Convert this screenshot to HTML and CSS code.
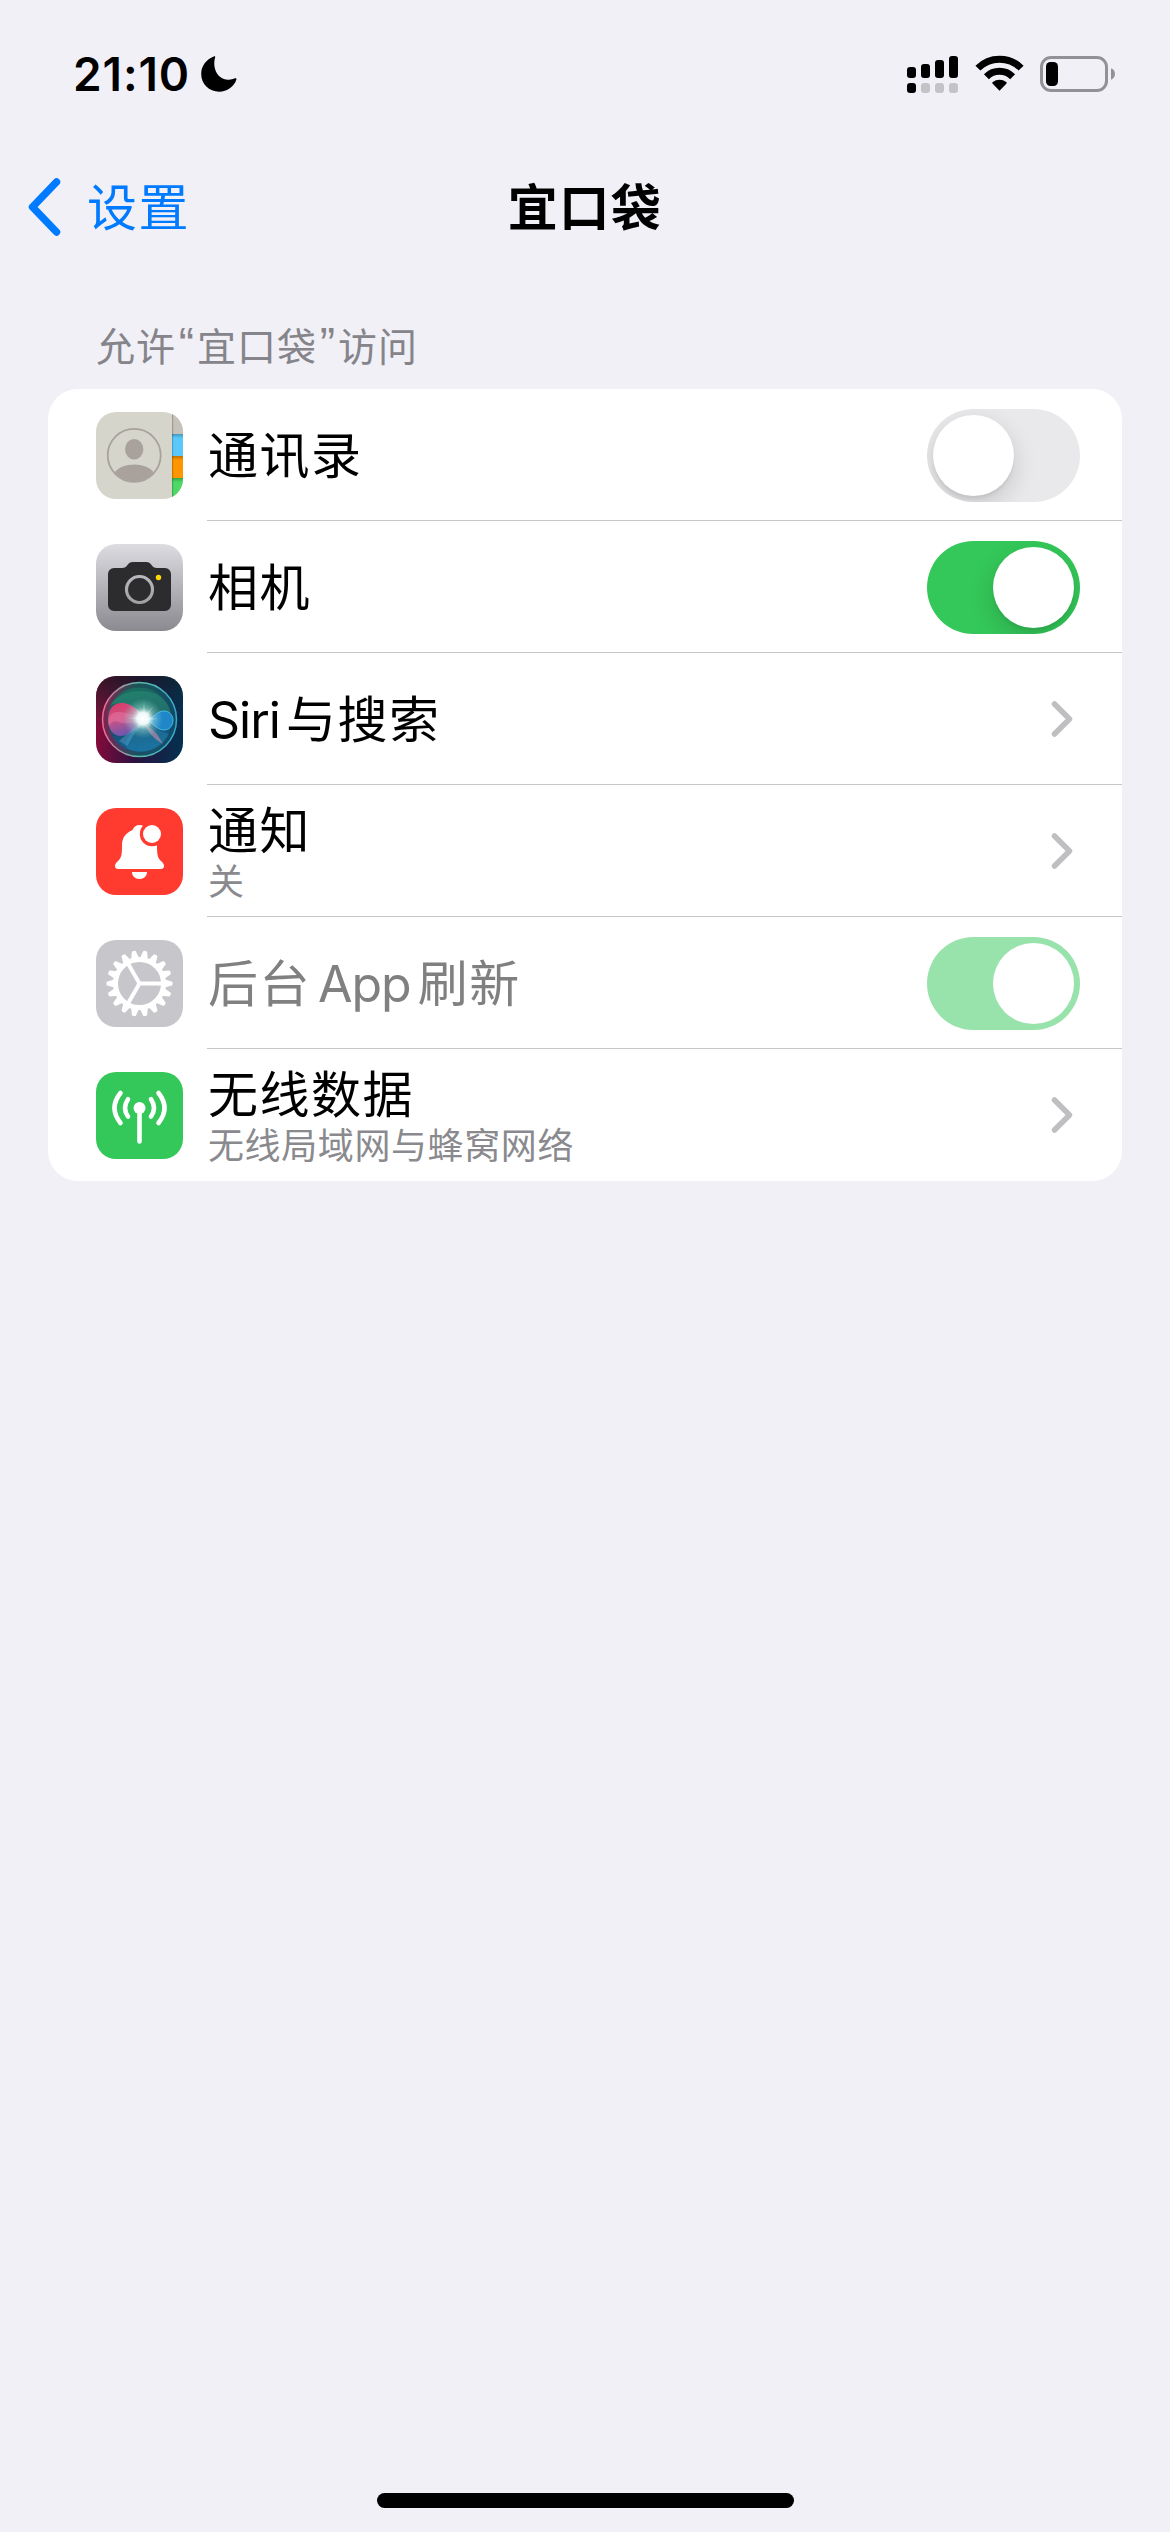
FILE: index.html
```html
<!DOCTYPE html>
<html lang="zh-CN">
<head>
<meta charset="utf-8">
<title>宜口袋</title>
<link rel="stylesheet" href="styles.css">
</head>
<body>
<div class="screen">
  <header class="status">
    <div class="status-left">
      <span class="time">21:10</span>
      <svg class="moon" width="36" height="36" viewBox="0 0 36 36"><path d="M12.8.5C13.8.1 14.5.6 14.1 1.600 11.400 11 15.500 23.400 27 23.700c2.700.1 5-.5 7-1.400 1-.4 1.800.2 1.400 1.300C33 31 26 35.700 18.200 35.700 8 35.700.2 28 .2 18 .2 10 5.300 3.300 12.800.5z"/></svg>
    </div>
    <div class="status-right">
      <svg width="52" height="38" viewBox="0 0 52 38">
        <rect x="0" y="11" width="9" height="11" rx="3"/><rect x="14" y="8" width="9" height="14" rx="3"/><rect x="28" y="4" width="9" height="18" rx="3"/><rect x="42" y="0" width="9" height="22" rx="3"/>
        <rect x="0" y="27" width="9" height="10" rx="3"/><g fill="#c3c3c7"><rect x="14" y="27" width="9" height="10" rx="3"/><rect x="28" y="27" width="9" height="10" rx="3"/><rect x="42" y="27" width="9" height="10" rx="3"/></g>
      </svg>
      <svg class="wifi" width="50" height="38" viewBox="0 0 50 38">
        <g fill="none" stroke="#000" stroke-width="7"><path d="M2.900 13.100a30.500 30.500 0 0 1 43.200 0"/><path d="M11.400 21.800a18.500 18.500 0 0 1 26.200 0"/></g>
        <path d="M24.500 35.700 17.700 28.800c-.6-.7-.5-1.300.1-1.700a11 11 0 0 1 13.400 0c.6.400.7 1 .1 1.700z"/>
      </svg>
      <svg class="battery" width="76" height="36" viewBox="0 0 76 36">
        <rect x="1.500" y="1.500" width="65" height="33" rx="9.500" fill="none" stroke="#929196" stroke-width="3"/>
        <rect x="6" y="6" width="12" height="24" rx="4.500"/><path d="M71 12.300c5.300 2 5.300 9.400 0 11.400z" fill="#929196"/>
      </svg>
    </div>
  </header>

  <nav class="nav">
    <a class="back">
      <svg width="36" height="60" viewBox="0 0 36 60"><path d="M31.500 5 7.500 30l24 25" fill="none" stroke="#007aff" stroke-width="7.500" stroke-linecap="round" stroke-linejoin="round"/></svg>
      <span>设置</span>
    </a>
    <h1 class="nav-title">宜口袋</h1>
  </nav>

  <h2 class="group-title">允许<span class="quote">“</span>宜口袋<span class="quote">”</span>访问</h2>

  <main class="card">
    <div class="row">
      <svg class="icon" width="87" height="87" viewBox="0 0 87 87">
        <defs><linearGradient id="tab" x1="0" x2="0" y1="0" y2="1"><stop offset="0" stop-opacity=".25"/><stop offset="1" stop-opacity="0"/></linearGradient></defs>
        <path fill="#d5d5cc" d="M0 0h87v87H0z"/><path fill="#c6c1b9" d="M76 0h11v22H76z"/><path fill="#5ac8fa" d="M76 22h11v22H76z"/><path fill="#ff9500" d="M76 44h11v22H76z"/><path fill="#4cd964" d="M76 66h11v21H76z"/>
        <path fill="url(#tab)" d="M76 22h11v4H76z"/><path fill="url(#tab)" d="M76 44h11v4H76z"/><path fill="url(#tab)" d="M76 66h11v4H76z"/><path opacity=".2" d="M76 0h1.200v87H76z"/>
        <circle cx="38.200" cy="43.300" r="26.500" fill="none" stroke="#a9a29c" stroke-width="1.800"/><ellipse cx="38.200" cy="37.300" rx="9.200" ry="10.300" fill="#a9a29c"/>
        <path d="M18.500 60.500c4-5.300 11-8 19.700-8s15.700 2.700 19.700 8a26.500 26.500 0 0 1-39.400 0z" fill="#a9a29c"/>
      </svg>
      <div class="body"><div class="text"><span class="label">通讯录</span></div><span class="switch"></span></div>
    </div>

    <div class="row">
      <svg class="icon" width="87" height="87" viewBox="0 0 87 87">
        <defs><linearGradient id="cam" x1="0" x2="0" y1="0" y2="1"><stop offset="0" stop-color="#dddce1"/><stop offset="1" stop-color="#8b8a90"/></linearGradient><linearGradient id="lens" x1="0" x2="0" y1="0" y2="1"><stop offset="0" stop-color="#b9b8bd"/><stop offset="1" stop-color="#a09fa4"/></linearGradient></defs>
        <path fill="url(#cam)" d="M0 0h87v87H0z"/>
        <path fill="#2c2c2e" d="M18 24h8c3 0 4-1 5.500-3s2.500-3 5.500-3h13c3 0 4 1 5.500 3s2.500 3 5.500 3h8a6 6 0 0 1 6 6v31a6 6 0 0 1-6 6H18a6 6 0 0 1-6-6V30a6 6 0 0 1 6-6z"/>
        <circle cx="43.500" cy="45.500" r="13" fill="none" stroke="url(#lens)" stroke-width="3.200"/><circle cx="62.500" cy="33.500" r="2.700" fill="#ffd60a"/>
      </svg>
      <div class="body"><div class="text"><span class="label">相机</span></div><span class="switch on"></span></div>
    </div>

    <div class="row">
      <svg class="icon" width="87" height="87" viewBox="0 0 87 87">
        <defs>
          <linearGradient id="sbg" x1="0" y1=".45" x2="1" y2=".55"><stop offset="0" stop-color="#8c0a3a"/><stop offset=".5" stop-color="#2a1240"/><stop offset="1" stop-color="#04304e"/></linearGradient>
          <linearGradient id="stop" x1=".45" y1="0" x2=".55" y2=".5"><stop offset="0" stop-color="#0c1a1c" stop-opacity=".6"/><stop offset="1" stop-color="#063a35" stop-opacity="0"/></linearGradient>
          <linearGradient id="orb" x1=".4" y1="0" x2=".6" y2="1"><stop offset="0" stop-color="#1b7660"/><stop offset=".5" stop-color="#1a4863"/><stop offset="1" stop-color="#1268a8"/></linearGradient>
          <linearGradient id="ring" x1="0" y1=".5" x2="1" y2=".5"><stop offset="0" stop-color="#f06a94"/><stop offset=".5" stop-color="#59bba8"/><stop offset="1" stop-color="#35a9c9"/></linearGradient>
          <linearGradient id="rim" x1="0" y1=".5" x2="1" y2=".5"><stop offset="0" stop-color="#8e1c4c"/><stop offset=".45" stop-color="#1d4c55"/><stop offset="1" stop-color="#0f4a66"/></linearGradient>
          <linearGradient id="pink" x1="0" y1="0" x2=".4" y2="1"><stop offset="0" stop-color="#ec3365"/><stop offset=".5" stop-color="#dc5287"/><stop offset="1" stop-color="#6f58b4"/></linearGradient>
          <radialGradient id="glow"><stop offset="0" stop-color="#fff"/><stop offset=".3" stop-color="#f2fffc" stop-opacity=".95"/><stop offset=".55" stop-color="#b7eee4" stop-opacity=".45"/><stop offset="1" stop-color="#85d9d0" stop-opacity="0"/></radialGradient>
        </defs>
        <path fill="url(#sbg)" d="M0 0h87v87H0z"/><path fill="url(#stop)" d="M0 0h87v87H0z"/>
        <circle cx="43.500" cy="43.500" r="37" fill="url(#orb)"/>
        <circle cx="43.500" cy="43.500" r="34.500" fill="none" stroke="url(#rim)" stroke-opacity=".8" stroke-width="5"/>
        <circle cx="43.500" cy="43.500" r="37" fill="none" stroke="url(#ring)" stroke-width="1.500"/>
        <path d="M14 30C22 14 48 12 60 18c8 4 14 12 15 20-14-6-19 2-27 6C39 36 25 22 14 30z" fill="#2c9a79" opacity=".45"/>
        <path d="M47 45C35 55 28 63 31 72c14 8 34 3 42-14-9-2-17-8-26-13z" fill="#258cac" opacity=".4"/>
        <path d="M50 43C41 32 33 26 24 27c-9 1-12 9-12 17 0 9 5 16 13 16 10 0 16-10 25-17z" fill="url(#pink)" opacity=".92"/>
        <path d="M49 43C38 47 30 49 22 46c-4-2-7 0-9 4-2-8 1-14 9-14 10 0 18 4 27 7z" fill="#fc96bb" opacity=".3"/>
        <path d="M49 44c8-1 11-9 19-9 5 0 9 4 9 9 0 6-4 10-9 10-8 0-11-8-19-10z" fill="#1f86c8" stroke="#4bcef0" stroke-width=".8"/>
        <path d="m48 46 13 12 6 10c-9-5-17-13-19-22z" fill="#ed8fab" opacity=".5"/><path d="M46 45 31 70l-8-5z" fill="#67b8dc" opacity=".35"/>
        <circle cx="47" cy="42.500" r="20" fill="url(#glow)"/>
        <path d="m48 24 1 14 8-7-6 10 11 2-11 1 4 7-7-6-8 11 5-12-13-2 13-1-6-9 8 7z" fill="#fff" opacity=".3"/>
      </svg>
      <div class="body"><div class="text"><span class="label"><span class="latin siri">Siri</span>与搜索</span></div><svg class="chev" width="24" height="40" viewBox="0 0 24 40"><path d="m4.500 5 15 15-15 15"/></svg></div>
    </div>

    <div class="row">
      <svg class="icon" width="87" height="87" viewBox="0 0 87 87">
        <path fill="#ff3b30" d="M0 0h87v87H0z"/>
        <path fill="#fff" d="M36.500 22c1.500-3.500 3.800-5 7-5s5.500 1.500 7 5c7 3 10.500 8 10.500 15.500 0 10 .7 12.500 4.500 16 2 2 2.500 3 2.500 4.500 0 2-1.200 3-3.200 3H22.200c-2 0-3.200-1-3.200-3 0-1.500.5-2.500 2.500-4.500 3.800-3.500 4.500-6 4.500-16C26 30 29.500 25 36.500 22zM36 64h15c0 4-3 7-7.500 7S36 68 36 64z"/>
        <circle cx="56" cy="26" r="12.200" fill="#ff3b30"/><circle cx="56" cy="26" r="9" fill="#fff"/>
      </svg>
      <div class="body"><div class="text double"><span class="label">通知</span><span class="sub">关</span></div><svg class="chev" width="24" height="40" viewBox="0 0 24 40"><path d="m4.500 5 15 15-15 15"/></svg></div>
    </div>

    <div class="row disabled">
      <svg class="icon" width="87" height="87" viewBox="0 0 87 87">
        <defs><path id="t" d="M68 39.300 75.700 41.400q.8.300.8 1.100v2q0 .8-.8 1.100L68 47.700z"/><g id="t3"><use href="#t"/><use href="#t" transform="rotate(20 43.500 43.500)"/><use href="#t" transform="rotate(40 43.500 43.500)"/></g></defs>
        <path fill="#c6c6cb" d="M0 0h87v87H0z"/>
        <g fill="#fff"><use href="#t3"/><use href="#t3" transform="rotate(60 43.500 43.500)"/><use href="#t3" transform="rotate(120 43.500 43.500)"/><use href="#t3" transform="rotate(180 43.500 43.500)"/><use href="#t3" transform="rotate(240 43.500 43.500)"/><use href="#t3" transform="rotate(300 43.500 43.500)"/></g>
        <circle cx="43.500" cy="43.500" r="24" fill="none" stroke="#fff" stroke-width="5"/>
        <path d="M67 43.500H43.500L31.700 23.100M43.500 43.500 31.700 63.900" fill="none" stroke="#fff" stroke-width="4"/>
      </svg>
      <div class="body"><div class="text"><span class="label">后台<span class="latin app">App</span>刷新</span></div><span class="switch on"></span></div>
    </div>

    <div class="row">
      <svg class="icon" width="87" height="87" viewBox="0 0 87 87">
        <path fill="#34c759" d="M0 0h87v87H0z"/>
        <g fill="none" stroke="#fff" stroke-width="4.600" stroke-linecap="round"><path d="M43.500 36v33.500M32 27.200q-6 8.800 0 17.300M55 27.200q6 8.800 0 17.300M24.500 21q-12 15 0 30M62.500 21q12 15 0 30"/></g><circle cx="43.500" cy="36" r="6" fill="#fff"/>
      </svg>
      <div class="body"><div class="text double"><span class="label">无线数据</span><span class="sub">无线局域网与蜂窝网络</span></div><svg class="chev" width="24" height="40" viewBox="0 0 24 40"><path d="m4.500 5 15 15-15 15"/></svg></div>
    </div>
  </main>
  <div class="home"></div>
</div>
</body>
</html>
```
FILE: styles.css
```css
* { box-sizing: border-box; }
body { margin: 0; background: #f1f0f6; color: #000; font-family: Inter, "Noto Sans CJK SC", sans-serif; }
svg { display: block; flex: none; }
.screen { width: 1170px; height: 2532px; display: flex; flex-direction: column; overflow: hidden; }

.status { height: 141px; padding: 0 54px 0 73px; display: flex; justify-content: space-between; }
.status-left { display: flex; padding-top: 56px; }
.time { width: 128px; font-size: 46px; font-weight: 600; line-height: 37px; letter-spacing: 0.900px; white-space: nowrap; }
.status-right { display: flex; padding-top: 56px; }
.wifi { margin: -1px 0 0 16px; }
.battery { margin-left: 15px; }

.nav { height: 132px; padding: 2px 25px 0 25px; display: grid; grid-template-columns: 1fr auto 1fr; align-items: center; }
.back { display: flex; align-items: center; gap: 26px; color: #007aff; font-size: 50px; line-height: 60px; letter-spacing: 1.500px; }
.back svg { margin-top: -2px; }
.nav-title { margin: 0; font-size: 50px; line-height: 60px; font-weight: 700; letter-spacing: 1.500px; }

.group-title { margin: 0; height: 116px; padding: 48px 0 0 96px; color: #85848a; font-size: 39px; line-height: 52px; font-weight: 400; letter-spacing: 1px; }
.quote { display: inline-block; width: 21px; font-family: "Liberation Sans", sans-serif; font-size: 46px; line-height: 30px; letter-spacing: 0; text-align: center; vertical-align: 1px; }

.card { margin: 0 48px; background: #fff; border-radius: 30px; overflow: hidden; }
.row { height: 132px; padding-left: 48px; display: flex; align-items: center; }
.icon { border-radius: 20px; }
.body { flex: 1; height: 132px; margin-left: 24px; padding-right: 42px; display: flex; align-items: center; justify-content: space-between; border-bottom: 1px solid #c6c6c8; }
.row:last-child .body { border-bottom-color: transparent; }
.text { display: flex; flex-direction: column; padding: 3px 0 0 1px; white-space: nowrap; }
.double { padding-top: 2px; }
.label { font-size: 50px; line-height: 60px; letter-spacing: 1.500px; }
.sub { color: #8a8a8e; font-size: 36px; line-height: 42px; letter-spacing: 0.600px; }
.latin { letter-spacing: -1px; }
.siri { margin-right: 6px; }
.app { margin: 0 7px 0 7px; }
.disabled .label { color: #808080; }

.switch { width: 153px; height: 93px; margin-top: 2px; padding: 6px; border-radius: 47px; background: #e9e9eb; display: flex; overflow: hidden; }
.switch::before { content: ""; width: 81px; height: 81px; border-radius: 50%; background: #fff; box-shadow: 0 9px 24px rgba(0, 0, 0, .15), 0 3px 3px rgba(0, 0, 0, .06); }
.switch.on { background: #34c759; justify-content: flex-end; }
.disabled .switch { opacity: .5; }
.disabled .switch::before { box-shadow: none; }
.chev { margin-right: 6px; fill: none; stroke: #bfbfc1; stroke-width: 5.500; stroke-linecap: round; stroke-linejoin: round; }

.home { width: 417px; height: 15px; margin: auto auto 24px; border-radius: 8px; background: #000; }
```
